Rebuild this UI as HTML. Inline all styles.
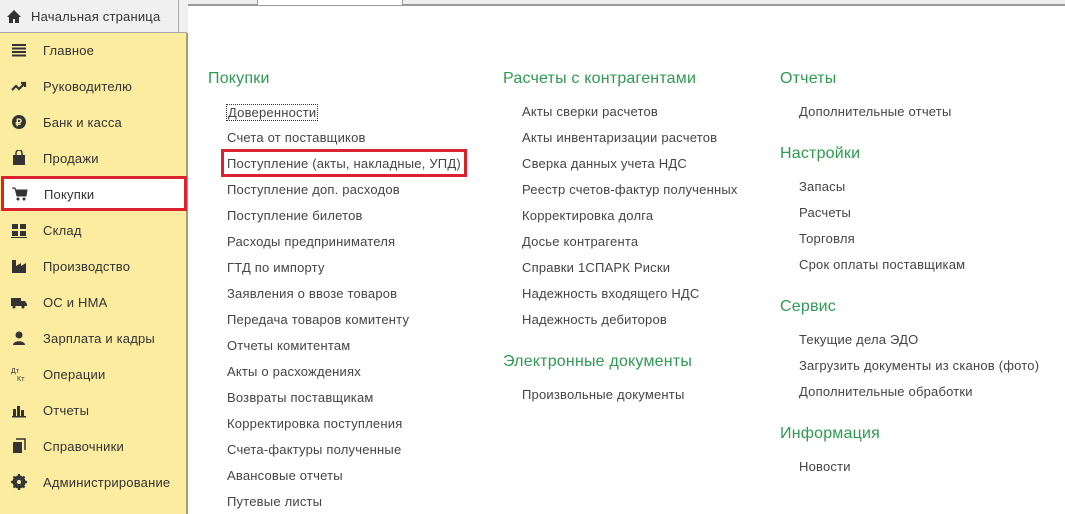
<!DOCTYPE html>
<html><head><meta charset="utf-8"><style>
*{margin:0;padding:0;box-sizing:border-box}
body{width:1065px;height:514px;overflow:hidden;background:#fff;font-family:"Liberation Sans",Arial,sans-serif;position:relative;color:#444}
.top{position:absolute;left:0;top:0;width:1065px;height:5px;background:#eeeeee;border-bottom:1px solid #999}
.home{position:absolute;left:0;top:0;width:179px;height:33px;background:#f0f0f0;border-right:1px solid #aaa;border-bottom:1px solid #aaa;font-size:13px;color:#333;letter-spacing:0.2px}
.home span{position:absolute;left:31px;top:9px}
.tabs{position:absolute;left:179px;top:0;width:9px;height:33px;background:#f0f0f0}
.side{position:absolute;left:0;top:32px;width:187px;height:482px;background:#fbeca0;border-right:1px solid #a8a07a;border-top:1px solid #aaa}
.it{position:absolute;left:0;width:186px;height:36px;font-size:13px;color:#333;letter-spacing:0.2px}
.it span{position:absolute;left:43px;top:10px}
.it svg{position:absolute;left:11px;top:9px}
.sel{background:#fff;border:3px solid #d9232e}
.panel{position:absolute;left:187px;top:5px;width:878px;height:509px;border-left:1px solid #999;border-top:1px solid #999;background:#fff}
.h{position:absolute;font-size:16px;color:#2e9a52;letter-spacing:0.2px;margin-top:1px}
.l{position:absolute;font-size:13px;color:#444;white-space:nowrap;letter-spacing:0.2px;margin-top:1px}
.tab{position:absolute;left:257px;top:0;width:146px;height:6px;background:#fff;border-left:1px solid #999;border-right:1px solid #999}
</style></head><body>
<div class="top"></div><div class="tab"></div>
<div class="panel"></div>
<div class="tabs"></div>
<div class="home"><svg style="position:absolute;left:7px;top:10px" width="14" height="13" viewBox="0 0 14 13"><path d="M7 0L0 7h2v6h4V9h2v4h4V7h2z" fill="#333"/></svg><span>Начальная страница</span></div>
<div class="side">
<div class="it" style="top:0"><svg width="16" height="16"><path d="M1 3h14M1 6.5h14M1 10h14M1 13.5h14" stroke="#333" stroke-width="2"/></svg><span>Главное</span></div>
<div class="it" style="top:36px"><svg width="16" height="16"><path d="M1 12l4-4 3 3 5-5M10 5h4v4" stroke="#333" stroke-width="2.2" fill="none"/></svg><span>Руководителю</span></div>
<div class="it" style="top:72px"><svg width="16" height="16"><circle cx="8" cy="8" r="7" fill="#333"/><text x="4.5" y="12" font-size="10" font-weight="bold" fill="#fbeca0" font-family="Liberation Sans">₽</text></svg><span>Банк и касса</span></div>
<div class="it" style="top:108px"><svg width="16" height="16"><path d="M2 5h12v10H2z" fill="#333"/><path d="M5 6V3a3 3 0 016 0v3" stroke="#333" stroke-width="1.5" fill="none"/></svg><span>Продажи</span></div>
<div class="it sel" style="top:143px;height:35px;left:1px;width:186px"><svg width="16" height="16" style="left:8px;top:7px"><path d="M0 2h3l2 8h9l1-6H4" fill="#333" stroke="#333"/><circle cx="6" cy="13" r="1.5" fill="#333"/><circle cx="12" cy="13" r="1.5" fill="#333"/></svg><span style="left:40px;top:8px">Покупки</span></div>
<div class="it" style="top:180px"><svg width="16" height="16"><path d="M1 2h6v5H1zM9 2h6v5H9zM1 9h6v5H1zM9 9h6v5H9z" fill="#333"/><path d="M0 15.5h16" stroke="#333"/></svg><span>Склад</span></div>
<div class="it" style="top:216px"><svg width="16" height="16"><path d="M1 15V2h4v6l5-3v3l5-3v10z" fill="#333"/></svg><span>Производство</span></div>
<div class="it" style="top:252px"><svg width="16" height="16"><path d="M0 4h10v8H0zM10 7h4l2 3v2h-6z" fill="#333"/><circle cx="3" cy="13" r="1.5" fill="#333"/><circle cx="12" cy="13" r="1.5" fill="#333"/></svg><span>ОС и НМА</span></div>
<div class="it" style="top:288px"><svg width="16" height="16"><circle cx="8" cy="5" r="3.5" fill="#333"/><path d="M2 15c0-5 12-5 12 0z" fill="#333"/></svg><span>Зарплата и кадры</span></div>
<div class="it" style="top:324px"><svg width="16" height="16"><text x="0" y="7" font-size="7" fill="#333" font-family="Liberation Sans">Дт</text><text x="6" y="15" font-size="7" fill="#333" font-family="Liberation Sans">Кт</text></svg><span>Операции</span></div>
<div class="it" style="top:360px"><svg width="16" height="16"><path d="M2 7h3v7H2zM6 4h3v10H6zM10 8h3v6h-3zM1 14h14v1.5H1z" fill="#333"/></svg><span>Отчеты</span></div>
<div class="it" style="top:396px"><svg width="16" height="16"><path d="M2 4h9v11H2z" fill="#333"/><path d="M5 1h9v11" stroke="#333" stroke-width="1.5" fill="none"/></svg><span>Справочники</span></div>
<div class="it" style="top:432px"><svg width="16" height="16"><circle cx="8" cy="8" r="5" fill="none" stroke="#333" stroke-width="3"/><path d="M8 0v16M0 8h16M2.5 2.5l11 11M13.5 2.5l-11 11" stroke="#333" stroke-width="2.2"/><circle cx="8" cy="8" r="2" fill="#fbeca0"/></svg><span>Администрирование</span></div>
</div>

<div class="h" style="left:208px;top:69px">Покупки</div>
<div class="l" style="left:226px;top:103px;border:1px dotted #333;padding:0 1px">Доверенности</div>
<div class="l" style="left:227px;top:129px">Счета от поставщиков</div>
<div style="position:absolute;left:221px;top:149px;width:246px;height:28px;border:3px solid #d9232e"></div>
<div class="l" style="left:227px;top:155px">Поступление (акты, накладные, УПД)</div>
<div class="l" style="left:227px;top:181px">Поступление доп. расходов</div>
<div class="l" style="left:227px;top:207px">Поступление билетов</div>
<div class="l" style="left:227px;top:233px">Расходы предпринимателя</div>
<div class="l" style="left:227px;top:259px">ГТД по импорту</div>
<div class="l" style="left:227px;top:285px">Заявления о ввозе товаров</div>
<div class="l" style="left:227px;top:311px">Передача товаров комитенту</div>
<div class="l" style="left:227px;top:337px">Отчеты комитентам</div>
<div class="l" style="left:227px;top:363px">Акты о расхождениях</div>
<div class="l" style="left:227px;top:389px">Возвраты поставщикам</div>
<div class="l" style="left:227px;top:415px">Корректировка поступления</div>
<div class="l" style="left:227px;top:441px">Счета-фактуры полученные</div>
<div class="l" style="left:227px;top:467px">Авансовые отчеты</div>
<div class="l" style="left:227px;top:493px">Путевые листы</div>

<div class="h" style="left:503px;top:69px">Расчеты с контрагентами</div>
<div class="l" style="left:522px;top:103px">Акты сверки расчетов</div>
<div class="l" style="left:522px;top:129px">Акты инвентаризации расчетов</div>
<div class="l" style="left:522px;top:155px">Сверка данных учета НДС</div>
<div class="l" style="left:522px;top:181px">Реестр счетов-фактур полученных</div>
<div class="l" style="left:522px;top:207px">Корректировка долга</div>
<div class="l" style="left:522px;top:233px">Досье контрагента</div>
<div class="l" style="left:522px;top:259px">Справки 1СПАРК Риски</div>
<div class="l" style="left:522px;top:285px">Надежность входящего НДС</div>
<div class="l" style="left:522px;top:311px">Надежность дебиторов</div>
<div class="h" style="left:503px;top:352px">Электронные документы</div>
<div class="l" style="left:522px;top:386px">Произвольные документы</div>

<div class="h" style="left:780px;top:69px">Отчеты</div>
<div class="l" style="left:799px;top:103px">Дополнительные отчеты</div>
<div class="h" style="left:780px;top:144px">Настройки</div>
<div class="l" style="left:799px;top:178px">Запасы</div>
<div class="l" style="left:799px;top:204px">Расчеты</div>
<div class="l" style="left:799px;top:230px">Торговля</div>
<div class="l" style="left:799px;top:256px">Срок оплаты поставщикам</div>
<div class="h" style="left:780px;top:297px">Сервис</div>
<div class="l" style="left:799px;top:331px">Текущие дела ЭДО</div>
<div class="l" style="left:799px;top:357px">Загрузить документы из сканов (фото)</div>
<div class="l" style="left:799px;top:383px">Дополнительные обработки</div>
<div class="h" style="left:780px;top:424px">Информация</div>
<div class="l" style="left:799px;top:458px">Новости</div>
</body></html>
